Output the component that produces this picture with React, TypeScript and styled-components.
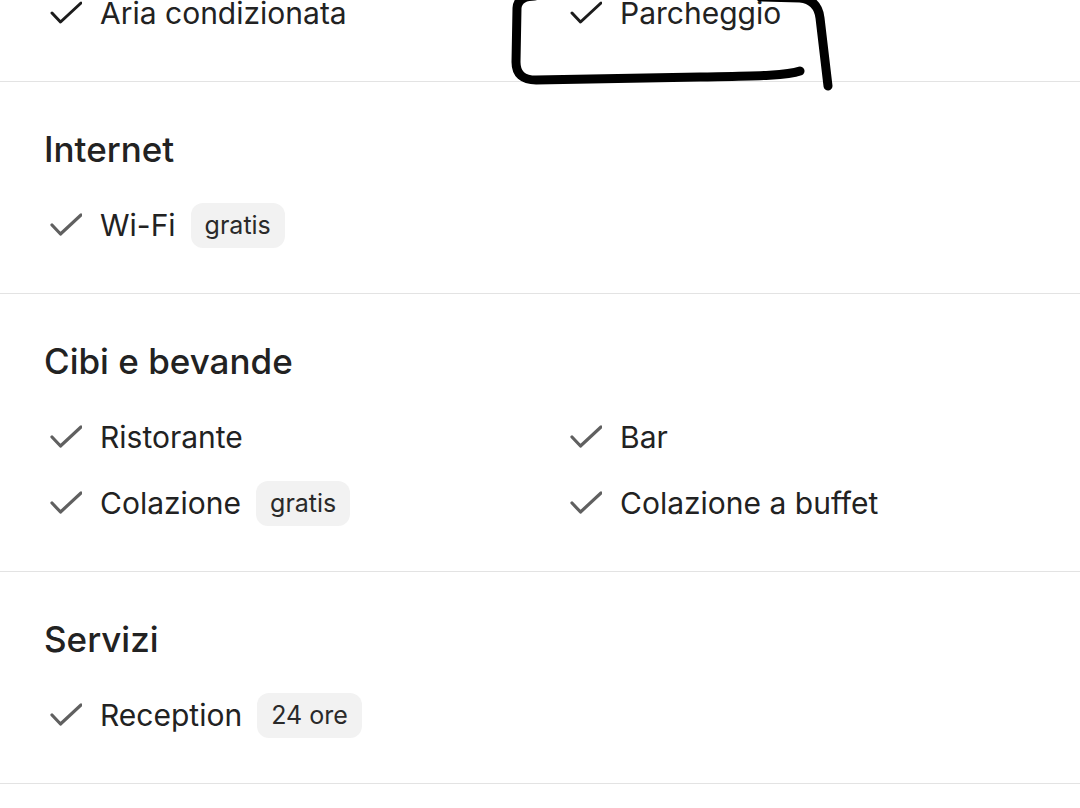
import styled, { createGlobalStyle } from "styled-components";

interface Item {
  label: string;
  tag?: string;
}

interface Group {
  title?: string;
  items: Item[];
  dark?: boolean;
}

const groups: Group[] = [
  {
    dark: true,
    items: [{ label: "Aria condizionata" }, { label: "Parcheggio" }],
  },
  {
    title: "Internet",
    items: [{ label: "Wi-Fi", tag: "gratis" }],
  },
  {
    title: "Cibi e bevande",
    items: [
      { label: "Ristorante" },
      { label: "Bar" },
      { label: "Colazione", tag: "gratis" },
      { label: "Colazione a buffet" },
    ],
  },
  {
    title: "Servizi",
    items: [{ label: "Reception", tag: "24 ore" }],
  },
];

const Check = ({ dark }: { dark?: boolean }) => (
  <CheckSvg viewBox="0 0 34 24" width={34} height={24}>
    <polyline
      points="4,12 12.5,21 33,2"
      fill="none"
      stroke={dark ? "#1c1c1c" : "#606060"}
      strokeWidth={dark ? 3 : 3.2}
      strokeLinecap="round"
      strokeLinejoin="round"
    />
  </CheckSvg>
);

const App = () => {
  return (
    <>
      <GlobalStyle />
      <Wrapper>
        <Page>
          {groups.map((group, index) => (
            <Section key={index} $first={!group.title}>
              {group.title && <Heading>{group.title}</Heading>}
              <List>
                {group.items.map((item) => (
                  <Row key={item.label}>
                    <Check dark={group.dark} />
                    <Label>{item.label}</Label>
                    {item.tag && <Tag>{item.tag}</Tag>}
                  </Row>
                ))}
              </List>
            </Section>
          ))}
        </Page>
        <Scribble viewBox="0 0 1080 100" width={1080} height={100}>
          <path
            d="M 800 71 C 786 76, 750 76, 700 77 L 536 80 Q 516 80 516 62 L 517 8 Q 518 -4 535 -4"
            fill="none"
            stroke="#000"
            strokeWidth={9}
            strokeLinecap="round"
            strokeLinejoin="round"
          />
          <path
            d="M 760 -3 L 800 -2 Q 818 0 820 18 L 828 86"
            fill="none"
            stroke="#000"
            strokeWidth={9}
            strokeLinecap="round"
            strokeLinejoin="round"
          />
        </Scribble>
      </Wrapper>
    </>
  );
};

export default App;

const GlobalStyle = createGlobalStyle`
  html, body {
    margin: 0;
    padding: 0;
    background: #ffffff;
  }
  body {
    font-family: Inter, "Noto Sans", "Liberation Sans", sans-serif;
    color: #222222;
  }
`;

const Wrapper = styled.div`
  position: relative;
  width: 1080px;
  height: 808px;
  overflow: hidden;
`;

const Page = styled.div`
  margin-top: -10px;
  display: flex;
  flex-direction: column;
`;

const Section = styled.section<{ $first?: boolean }>`
  padding: ${(p) => (p.$first ? "0" : "47px")} 44px 45px;
  border-bottom: 1px solid #e3e3e3;
`;

const Heading = styled.h2`
  margin: 0 0 33px;
  font-size: 35px;
  line-height: 40px;
  font-weight: 500;
  color: #222222;
`;

const List = styled.div`
  display: grid;
  grid-template-columns: 520px 520px;
  row-gap: 20px;
  padding-left: 4px;
`;

const Row = styled.div`
  display: flex;
  align-items: center;
  height: 46px;
`;

const CheckSvg = styled.svg`
  flex-shrink: 0;
  margin-right: 18px;
`;

const Label = styled.span`
  font-size: 30px;
  line-height: 46px;
  color: #222222;
`;

const Tag = styled.span`
  margin-left: 15px;
  height: 45px;
  padding: 0 14px;
  display: flex;
  align-items: center;
  border-radius: 12px;
  background: #f2f2f2;
  font-size: 25px;
  color: #2a2a2a;
`;

const Scribble = styled.svg`
  position: absolute;
  top: 0;
  left: 0;
  pointer-events: none;
`;
